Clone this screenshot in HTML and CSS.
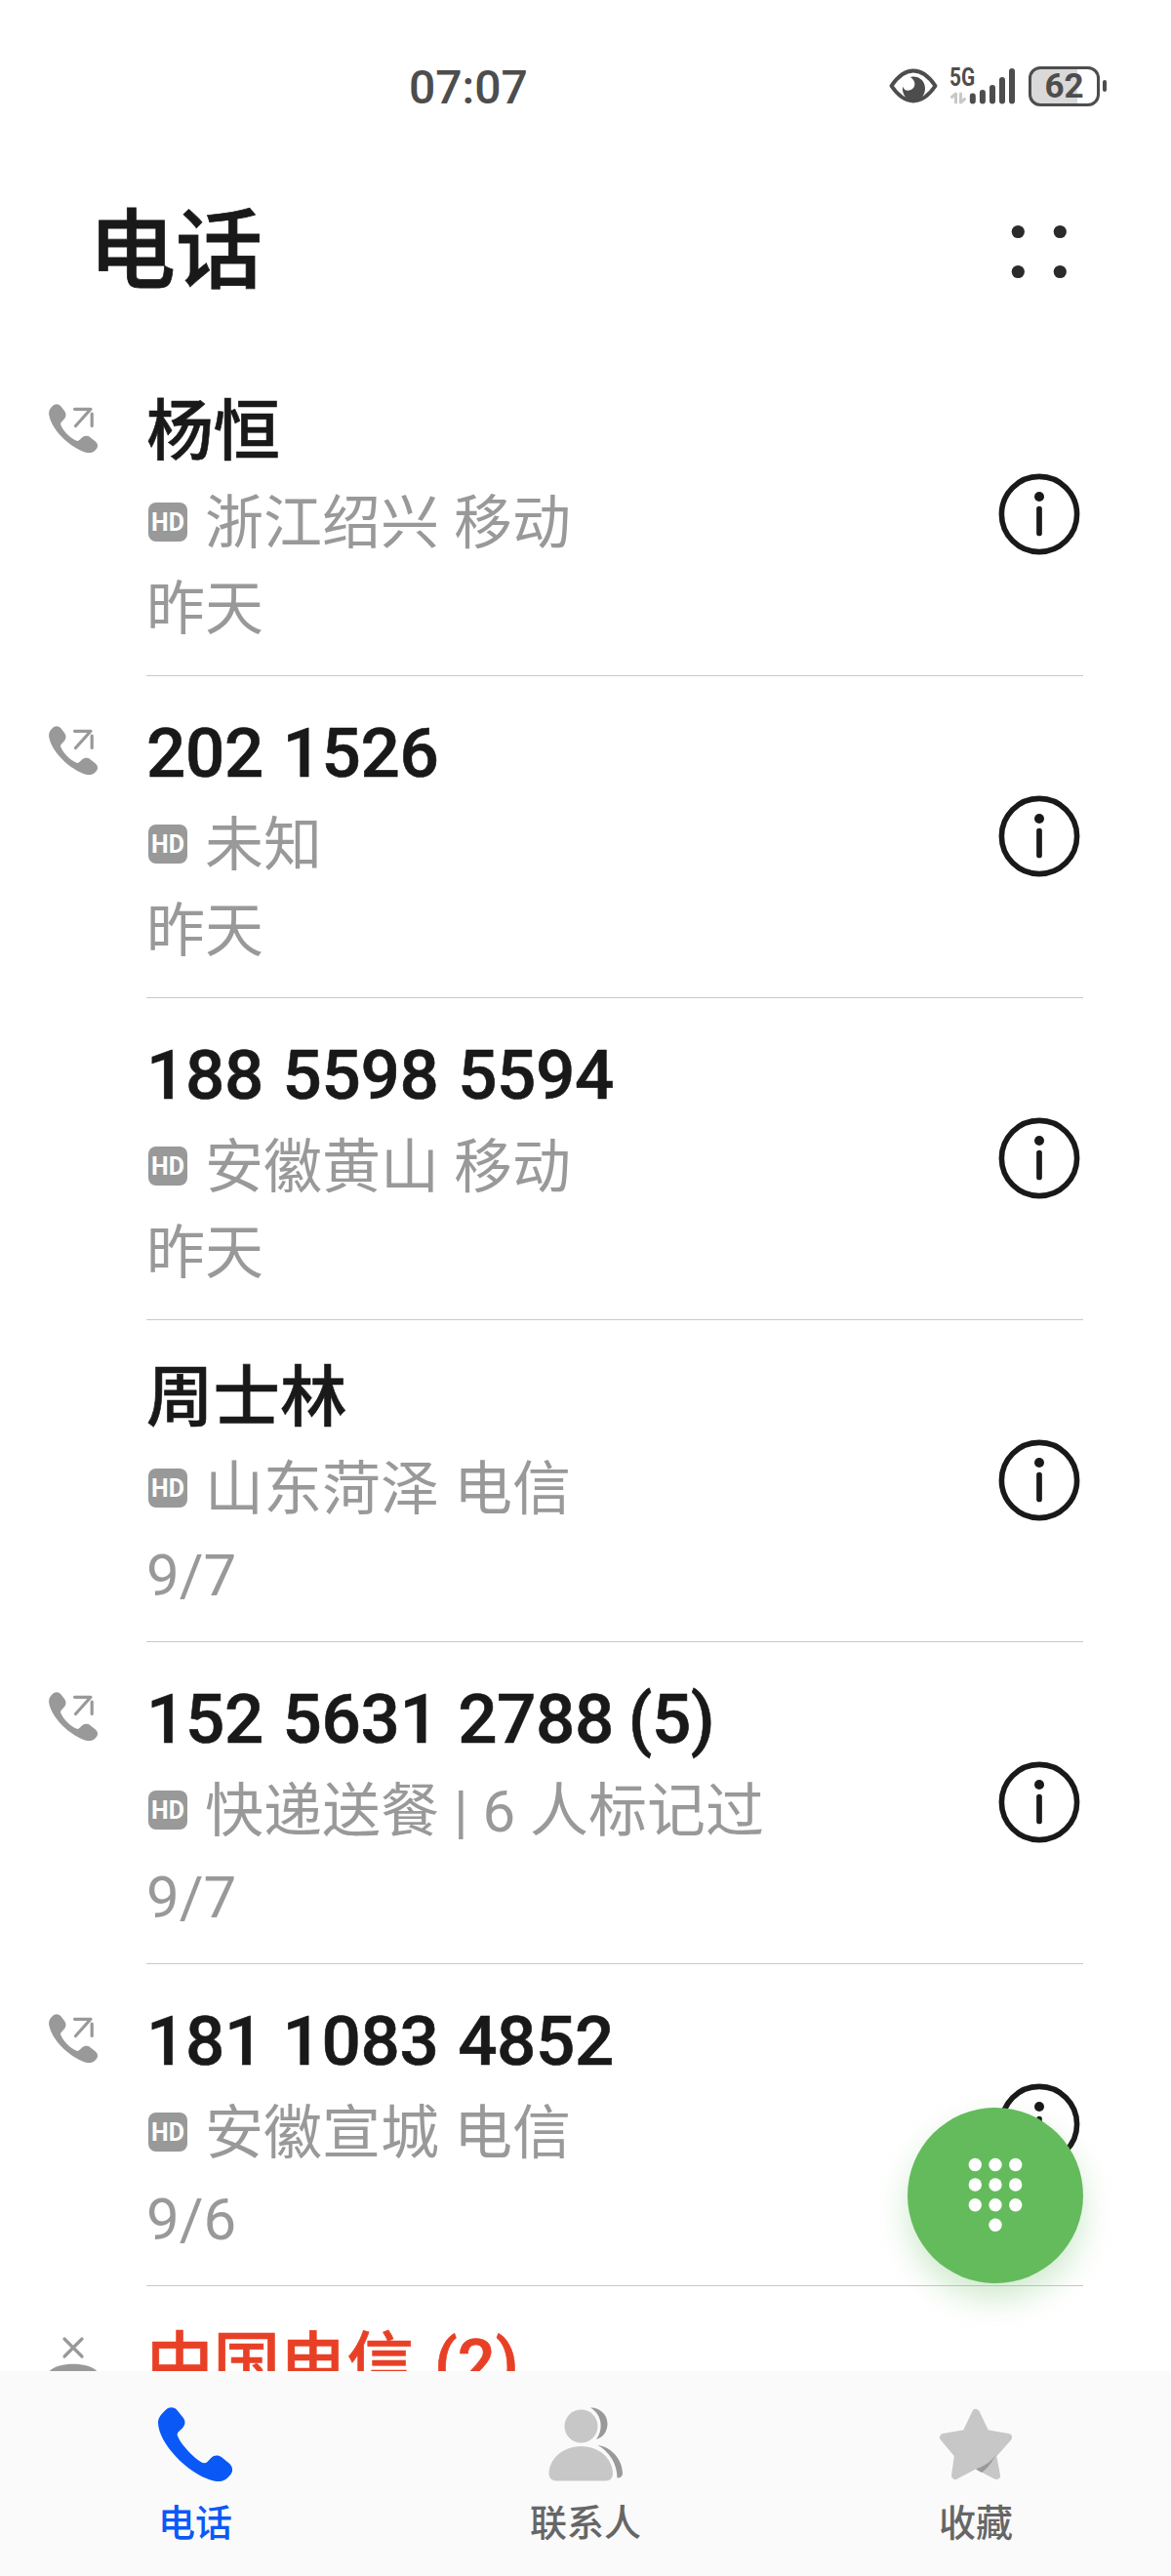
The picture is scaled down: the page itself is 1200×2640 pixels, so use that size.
FILE: index.html
```html
<!DOCTYPE html>
<html lang="zh-CN">
<head>
    <meta charset="UTF-8">
    <meta name="viewport" content="width=device-width, initial-scale=1.0">
    <title>电话</title>
    <link rel="stylesheet" href="styles.css">
</head>
<body>

    <!-- shared icons -->
    <svg class="sprite" aria-hidden="true">
        <symbol id="icon-handset" viewBox="0 0 70 76" preserveAspectRatio="none">
            <path d="M7.5 2.5C10-0.5 15-0.6 17.5 2.5L23.5 10.5C26.3 14 25.8 18.5 22.5 22L19.500 25C18 26.500 17.800 28 18.600 30C22.500 39.500 33 51 41 56.500C43 57.800 45 57.500 46.500 56L50 52C52.500 49 57 48.700 60 51.300L66.500 57C70.500 60.500 71.200 65 68.500 69L65.500 72.500C61.500 76.500 56 77 50 74.800C27 67 0.500 37 0 16C-0.100 10.500 3.500 6.500 7.500 2.500Z"/>
        </symbol>
        <symbol id="icon-outgoing" viewBox="0 0 50 50">
            <path fill="#999" d="M3.5 2.500C6-0.500 10-0.600 12.300 2.200L16 7C18.200 10 17.800 13.300 15.500 15.800L13 18.500C12 19.700 11.800 20.500 12.500 22C15.500 28.500 21.500 34.500 28 37.500C29.500 38.200 30.500 38 31.700 36.800L34 34.500C36.500 32.300 40 32.300 42.500 34.300L47.500 38.300C50.500 40.800 50.800 43.800 48.500 46.500L47 48C44.500 50.500 40.500 50.600 36.500 49.200C20.500 43.500 2.500 26 0.200 11C-0.300 7.500 1 5 3.500 2.500Z"/>
            <path d="M26.500 5.300H43L27.500 22.500M44.200 10V22.500" fill="none" stroke="#999" stroke-width="3.200" stroke-linecap="round" stroke-linejoin="round"/>
        </symbol>
        <symbol id="icon-info" viewBox="0 0 84 84">
            <circle cx="42" cy="42" r="38.600" fill="none" stroke="#191919" stroke-width="5.600"/>
            <circle cx="42" cy="24" r="5" fill="#191919"/>
            <path d="M42 36.500V61.500" stroke="#191919" stroke-width="5.700" stroke-linecap="round"/>
        </symbol>
    </svg>

    <div class="status-bar">
        <span class="time">07:07</span>
        <div class="status-icons">
            <svg class="eye" width="50" height="36" viewBox="0 0 50 36">
                <path d="M2.500 18Q13 2.500 25 2.500T47.500 18Q37 33.500 25 33.500T2.500 18Z" fill="none" stroke="#4d4d4d" stroke-width="4" stroke-linejoin="round"/>
                <path d="M24 8.500C31 8 37 13 37 20.500C37 27 33 33 26 33C18 33 13 27 14 18.500C15 22 18 23.500 21 22.500C27 21 29 14 22 9Z" fill="#4d4d4d"/>
            </svg>
            <div class="signal">
                <span class="network">5G</span>
                <svg width="66" height="40" viewBox="0 0 66 40">
                    <path d="M5.500 37V28L1.500 31.500M10.500 28V37L14.500 33.500" fill="none" stroke="#c8c8c8" stroke-width="3" stroke-linecap="round" stroke-linejoin="round"/>
                    <path d="M22.800 30.500V35.500M32.900 27V35.500M43 22V35.500M53 14V35.500M63 5V35.500" stroke="#4d4d4d" stroke-width="6" stroke-linecap="round"/>
                </svg>
            </div>
            <div class="battery"><span>62</span></div>
            <div class="battery-cap"></div>
        </div>
    </div>

    <header>
        <h1>电话</h1>
        <svg class="more" width="60" height="60" viewBox="0 0 60 60" fill="#2b2b2b">
            <circle cx="8.300" cy="9.500" r="6.600"/>
            <circle cx="51.300" cy="9.500" r="6.600"/>
            <circle cx="8.300" cy="50.500" r="6.600"/>
            <circle cx="51.300" cy="50.500" r="6.600"/>
        </svg>
    </header>

    <main class="call-list">
        <div class="call">
            <svg class="call-type"><use href="#icon-outgoing"/></svg>
            <div class="call-body">
                <div class="call-text">
                    <h2>杨恒</h2>
                    <p class="place"><span class="hd">HD</span>浙江绍兴 移动</p>
                    <p class="date">昨天</p>
                </div>
                <svg class="info"><use href="#icon-info"/></svg>
            </div>
        </div>
        <div class="call">
            <svg class="call-type"><use href="#icon-outgoing"/></svg>
            <div class="call-body">
                <div class="call-text">
                    <h2 class="number">202 1526</h2>
                    <p class="place"><span class="hd">HD</span>未知</p>
                    <p class="date">昨天</p>
                </div>
                <svg class="info"><use href="#icon-info"/></svg>
            </div>
        </div>
        <div class="call">
            <div class="call-type"></div>
            <div class="call-body">
                <div class="call-text">
                    <h2 class="number">188 5598 5594</h2>
                    <p class="place"><span class="hd">HD</span>安徽黄山 移动</p>
                    <p class="date">昨天</p>
                </div>
                <svg class="info"><use href="#icon-info"/></svg>
            </div>
        </div>
        <div class="call">
            <div class="call-type"></div>
            <div class="call-body">
                <div class="call-text">
                    <h2>周士林</h2>
                    <p class="place"><span class="hd">HD</span>山东菏泽 电信</p>
                    <p class="date">9/7</p>
                </div>
                <svg class="info"><use href="#icon-info"/></svg>
            </div>
        </div>
        <div class="call">
            <svg class="call-type"><use href="#icon-outgoing"/></svg>
            <div class="call-body">
                <div class="call-text">
                    <h2 class="number">152 5631 2788 <span class="count">(5)</span></h2>
                    <p class="place"><span class="hd">HD</span>快递送餐 | 6 人标记过</p>
                    <p class="date">9/7</p>
                </div>
                <svg class="info"><use href="#icon-info"/></svg>
            </div>
        </div>
        <div class="call">
            <svg class="call-type"><use href="#icon-outgoing"/></svg>
            <div class="call-body">
                <div class="call-text">
                    <h2 class="number">181 1083 4852</h2>
                    <p class="place"><span class="hd">HD</span>安徽宣城 电信</p>
                    <p class="date">9/6</p>
                </div>
                <svg class="info"><use href="#icon-info"/></svg>
            </div>
        </div>
        <div class="call missed">
            <svg class="call-type" viewBox="0 0 50 50">
                <path d="M16 3L34 21M34 3L16 21" stroke="#999" fill="none" stroke-width="3.200" stroke-linecap="round"/>
                <path d="M0 37C8 26 42 26 50 37V44H0Z" fill="#999"/>
            </svg>
            <div class="call-body">
                <div class="call-text">
                    <h2>中国电信 (2)</h2>
                </div>
            </div>
        </div>
    </main>

    <button class="dial-button" aria-label="拨号">
        <svg width="56" height="78" viewBox="0 0 56 78" fill="#fff">
            <circle cx="7.300" cy="7.500" r="6.700"/><circle cx="28" cy="7.500" r="6.700"/><circle cx="48.700" cy="7.500" r="6.700"/>
            <circle cx="7.300" cy="28" r="6.700"/><circle cx="28" cy="28" r="6.700"/><circle cx="48.700" cy="28" r="6.700"/>
            <circle cx="7.300" cy="48.700" r="6.700"/><circle cx="28" cy="48.700" r="6.700"/><circle cx="48.700" cy="48.700" r="6.700"/>
            <circle cx="28" cy="69.300" r="6.700"/>
        </svg>
    </button>

    <nav>
        <a href="#" class="active">
            <svg width="76" height="76" fill="#0a59f7"><use href="#icon-handset" width="76" height="76"/></svg>
            电话
        </a>
        <a href="#">
            <svg width="76" height="76" viewBox="0 0 76 76">
                <path d="M43 0.500C52 0 60.500 7 60.500 17C60.500 25 56 31 49 33C56 24 56 8 43 0.500Z" fill="#999"/>
                <path d="M50.500 39C66 41 76 55 76 68C75.800 71 73.500 72.500 70.500 72.500C70.500 58 62 45 50.500 39Z" fill="#999"/>
                <circle cx="33.500" cy="19.500" r="17" fill="#c7c7c7"/>
                <path d="M33.500 40C53 40 66 54 66 68C66 73 63 75.500 59 75.500H8C4 75.500 0.500 73 0.500 68C0.500 54 14 40 33.500 40Z" fill="#c7c7c7"/>
            </svg>
            联系人
        </a>
        <a href="#">
            <svg width="76" height="76" viewBox="0 0 76 76">
                <path d="M38 6L48 27L71 31L55 49L59 70L38 59L17 70L20 49L5 31L28 27Z" fill="#c7c7c7" stroke="#c7c7c7" stroke-width="8" stroke-linejoin="round"/>
                <path d="M59 48C54 56 46 61 38 63.500L44 67Q53 60 59 48Z" fill="#999"/>
            </svg>
            收藏
        </a>
    </nav>

</body>
</html>
```
FILE: styles.css
```css
* {
    box-sizing: border-box;
}

body {
    font-family: Roboto, "Noto Sans CJK SC", sans-serif;
    margin: 0;
    height: 2640px;
    display: flex;
    flex-direction: column;
    overflow: hidden;
    position: relative;
    background-color: #fff;
    color: #191919;
}

h1, h2, p {
    margin: 0;
}

.sprite {
    position: absolute;
    width: 0;
    height: 0;
}

.status-bar {
    height: 176px;
    padding: 0 66px 0 419px;
    display: flex;
    flex: none;
    align-items: center;
    justify-content: space-between;
    color: #4d4d4d;
}

.time {
    margin-top: 4px;
    font-size: 48px;
    font-weight: 500;
    line-height: 60px;
}

.status-icons {
    display: flex;
    align-items: center;
}

.eye {
    margin-right: 13px;
}

.signal {
    position: relative;
    height: 40px;
    margin-right: 14px;
}

.network {
    position: absolute;
    left: -1px;
    top: -1px;
    font-size: 26px;
    font-weight: 700;
    line-height: 24px;
    transform: scaleX(0.8);
    transform-origin: left;
}

.battery {
    width: 73px;
    height: 41px;
    border: 3px solid #4d4d4d;
    border-radius: 12px;
    background: linear-gradient(to right, #d9d9d9 70%, #fff 70%);
    font-size: 35px;
    font-weight: 700;
    line-height: 36px;
    text-align: center;
}

.battery-cap {
    width: 4px;
    height: 12px;
    margin-left: 3px;
    border-radius: 2px;
    background-color: #4d4d4d;
}

header {
    height: 187px;
    padding: 30px 105px 0 91px;
    display: flex;
    flex: none;
    align-items: flex-start;
    justify-content: space-between;
}

h1 {
    font-size: 89px;
    font-weight: 500;
    line-height: 104px;
    -webkit-text-stroke: 0.8px #191919;
}

.more {
    margin-top: 22px;
}

.call-list {
    flex: 1;
    overflow: hidden;
}

.call {
    height: 330px;
    padding: 0 90px 0 50px;
    display: flex;
}

.call-type {
    width: 50px;
    height: 50px;
    margin: 51px 50px 0 0;
    flex: none;
}

.call-body {
    flex: 1;
    padding-right: 3px;
    display: flex;
    align-items: center;
    justify-content: space-between;
    border-bottom: 1px solid #c8c8c8;
}

.call-text {
    height: 330px;
    padding-top: 40px;
}

h2 {
    font-size: 68.500px;
    font-weight: 500;
    line-height: 80px;
    -webkit-text-stroke: 0.6px;
}

.number {
    font-size: 71px;
    line-height: 78px;
    padding-bottom: 2px;
    letter-spacing: -0.4px;
    word-spacing: 2.500px;
}

.count {
    margin-left: -5px;
}

.place,
.date {
    display: flex;
    align-items: center;
    color: #999;
    font-size: 60px;
    line-height: 88px;
}

.place {
    margin-top: 10px;
}

.hd {
    width: 40px;
    height: 40px;
    margin: 0 18px 3px 2px;
    border-radius: 8px;
    background-color: #999;
    color: #fff;
    font-size: 25px;
    font-weight: 700;
    line-height: 41px;
    text-align: center;
}

.info {
    width: 84px;
    height: 84px;
    margin-bottom: 1px;
}

.missed h2 {
    color: #e84026;
    word-spacing: 4px;
}

.dial-button {
    position: absolute;
    left: 930px;
    top: 2160px;
    width: 180px;
    height: 180px;
    display: flex;
    align-items: center;
    justify-content: center;
    border: none;
    border-radius: 50%;
    background-color: #64bb5c;
    box-shadow: 0 16px 32px rgba(100, 187, 92, 0.3);
}

nav {
    height: 210px;
    display: flex;
    flex: none;
    background-color: #fafafa;
}

nav a {
    flex: 1;
    padding-top: 37px;
    display: flex;
    flex-direction: column;
    align-items: center;
    gap: 20px;
    color: #666;
    font-size: 38px;
    font-weight: 500;
    line-height: 46px;
    text-decoration: none;
}

nav .active {
    color: #0a59f7;
}
```
